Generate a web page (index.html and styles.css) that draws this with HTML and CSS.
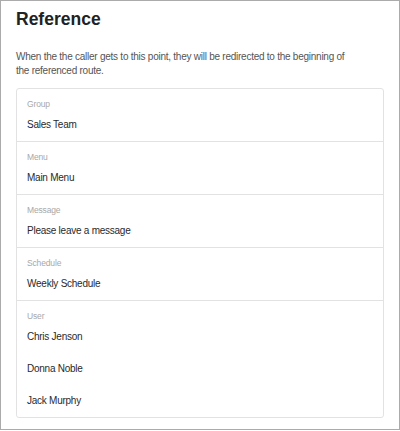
FILE: index.html
```html
<!DOCTYPE html>
<html>
<head>
<meta charset="utf-8">
<link rel="stylesheet" href="styles.css">
</head>
<body>
<div class="frame">
  <h1 class="title">Reference</h1>
  <p class="desc">When the the caller gets to this point, they will be redirected to the beginning of the referenced route.</p>
  <div class="card">
    <div class="section">
      <div class="label">Group</div>
      <div class="value">Sales Team</div>
    </div>
    <div class="section">
      <div class="label">Menu</div>
      <div class="value">Main Menu</div>
    </div>
    <div class="section">
      <div class="label">Message</div>
      <div class="value">Please leave a message</div>
    </div>
    <div class="section">
      <div class="label">Schedule</div>
      <div class="value">Weekly Schedule</div>
    </div>
    <div class="section">
      <div class="label">User</div>
      <div class="value">Chris Jenson</div>
      <div class="value">Donna Noble</div>
      <div class="value">Jack Murphy</div>
    </div>
  </div>
</div>
</body>
</html>
```

FILE: styles.css
```css
html, body {
  margin: 0;
  padding: 0;
  background: #fff;
}
body {
  font-family: "Liberation Sans", Arial, sans-serif;
}
.frame {
  box-sizing: border-box;
  width: 400px;
  height: 430px;
  border: 1px solid #ababab;
  padding: 7px 15px 0;
}
.title {
  margin: 0;
  font-size: 17.5px;
  line-height: 22px;
  font-weight: bold;
  color: #222;
}
.desc {
  margin: 20px 0 0;
  max-width: 340px;
  font-size: 10px;
  letter-spacing: -0.25px;
  line-height: 14px;
  color: #555;
}
.card {
  margin-top: 10px;
  border: 1px solid #e2e2e2;
  border-radius: 3px;
}
.section {
  display: flex;
  flex-direction: column;
  padding: 9px 10px 9px;
  border-top: 1px solid #e2e2e2;
}
.section:first-child {
  border-top: none;
}
.label {
  font-size: 8.5px;
  letter-spacing: -0.15px;
  line-height: 12px;
  color: #a8a8a8;
}
.value {
  margin-top: 8px;
  font-size: 10px;
  letter-spacing: -0.25px;
  line-height: 14px;
  color: #2a2a2a;
}
.value + .value {
  margin-top: 18px;
}
```
